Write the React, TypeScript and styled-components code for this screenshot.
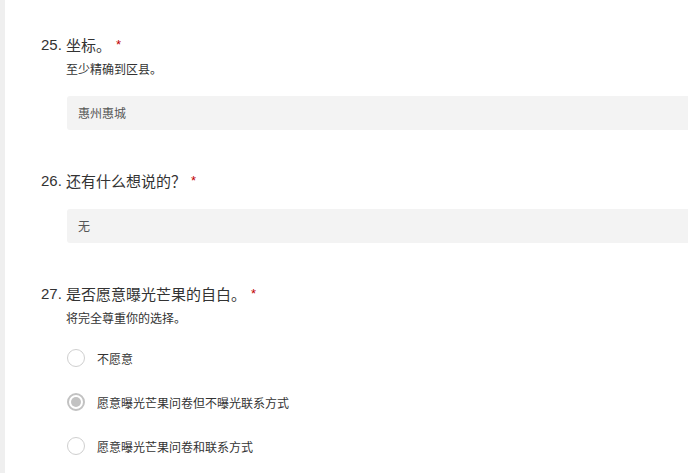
import React from "react";
import styled, { createGlobalStyle } from "styled-components";

const GlobalStyle = createGlobalStyle`
  html, body {
    margin: 0;
    padding: 0;
    background: #fff;
    overflow: hidden;
  }
  body {
    font-family: "Liberation Sans", "Noto Sans CJK SC", Arial, sans-serif;
    color: #333;
  }
`;

type Option = { label: string; checked?: boolean };

type Question = {
  no: number;
  title: string;
  desc?: string;
  answer?: string;
  options?: Option[];
};

const questions: Question[] = [
  { no: 25, title: "坐标。", desc: "至少精确到区县。", answer: "惠州惠城" },
  { no: 26, title: "还有什么想说的？", answer: "无" },
  {
    no: 27,
    title: "是否愿意曝光芒果的自白。",
    desc: "将完全尊重你的选择。",
    options: [
      { label: "不愿意" },
      { label: "愿意曝光芒果问卷但不曝光联系方式", checked: true },
      { label: "愿意曝光芒果问卷和联系方式" },
    ],
  },
];

function App() {
  return (
    <Page>
      <GlobalStyle />
      <Strip />
      <Content>
        {questions.map((q) => (
          <QuestionBlock key={q.no}>
            <TitleRow>
              <Number>{q.no}.</Number>
              <TitleText>{q.title}</TitleText>
              <Required>*</Required>
            </TitleRow>
            {q.desc && <Desc>{q.desc}</Desc>}
            {q.answer && <AnswerBox hasDesc={!!q.desc}>{q.answer}</AnswerBox>}
            {q.options && (
              <OptionList>
                {q.options.map((o) => (
                  <OptionRow key={o.label}>
                    <Radio checked={!!o.checked} />
                    <OptionLabel>{o.label}</OptionLabel>
                  </OptionRow>
                ))}
              </OptionList>
            )}
          </QuestionBlock>
        ))}
      </Content>
    </Page>
  );
}

const Page = styled.div`
  display: flex;
  width: 688px;
  height: 473px;
  overflow: hidden;
`;

const Strip = styled.div`
  width: 5px;
  flex-shrink: 0;
  background: #efefef;
`;

const Content = styled.div`
  flex: 1;
  padding: 33px 0 0 36px;
  display: flex;
  flex-direction: column;
  gap: 39px;
`;

const QuestionBlock = styled.div`
  display: flex;
  flex-direction: column;
`;

const TitleRow = styled.div`
  display: flex;
  align-items: center;
  height: 22px;
  font-size: 15px;
  color: #333;
`;

const Number = styled.span`
  width: 25px;
  flex-shrink: 0;
`;

const TitleText = styled.span``;

const Required = styled.span`
  color: #c00000;
  font-size: 13px;
  margin: 4px 0 0 5px;
  align-self: flex-start;
  line-height: 16px;
`;

const Desc = styled.div`
  margin: 6px 0 0 25px;
  font-size: 12px;
  line-height: 18px;
  color: #333;
`;

const AnswerBox = styled.div<{ hasDesc: boolean }>`
  margin: ${(p) => (p.hasDesc ? "17px" : "18px")} 0 0 26px;
  width: 700px;
  height: 34px;
  box-sizing: border-box;
  padding: 0 0 1px 11px;
  display: flex;
  align-items: center;
  background: #f3f3f3;
  border-radius: 3px;
  font-size: 12px;
  color: #555;
`;

const OptionList = styled.div`
  margin: 8px 0 0 26px;
  display: flex;
  flex-direction: column;
`;

const OptionRow = styled.div`
  display: flex;
  align-items: center;
  height: 44px;
`;

const Radio = styled.span<{ checked: boolean }>`
  width: 18px;
  height: 18px;
  box-sizing: border-box;
  border-radius: 50%;
  border: ${(p) => (p.checked ? "2px solid #c2c2c2" : "1px solid #cfcfcf")};
  background: #fff;
  display: flex;
  align-items: center;
  justify-content: center;
  flex-shrink: 0;

  &::after {
    content: "";
    display: ${(p) => (p.checked ? "block" : "none")};
    width: 10px;
    height: 10px;
    border-radius: 50%;
    background: #c2c2c2;
  }
`;

const OptionLabel = styled.span`
  margin-left: 12px;
  font-size: 12px;
  color: #333;
`;

export default App;
